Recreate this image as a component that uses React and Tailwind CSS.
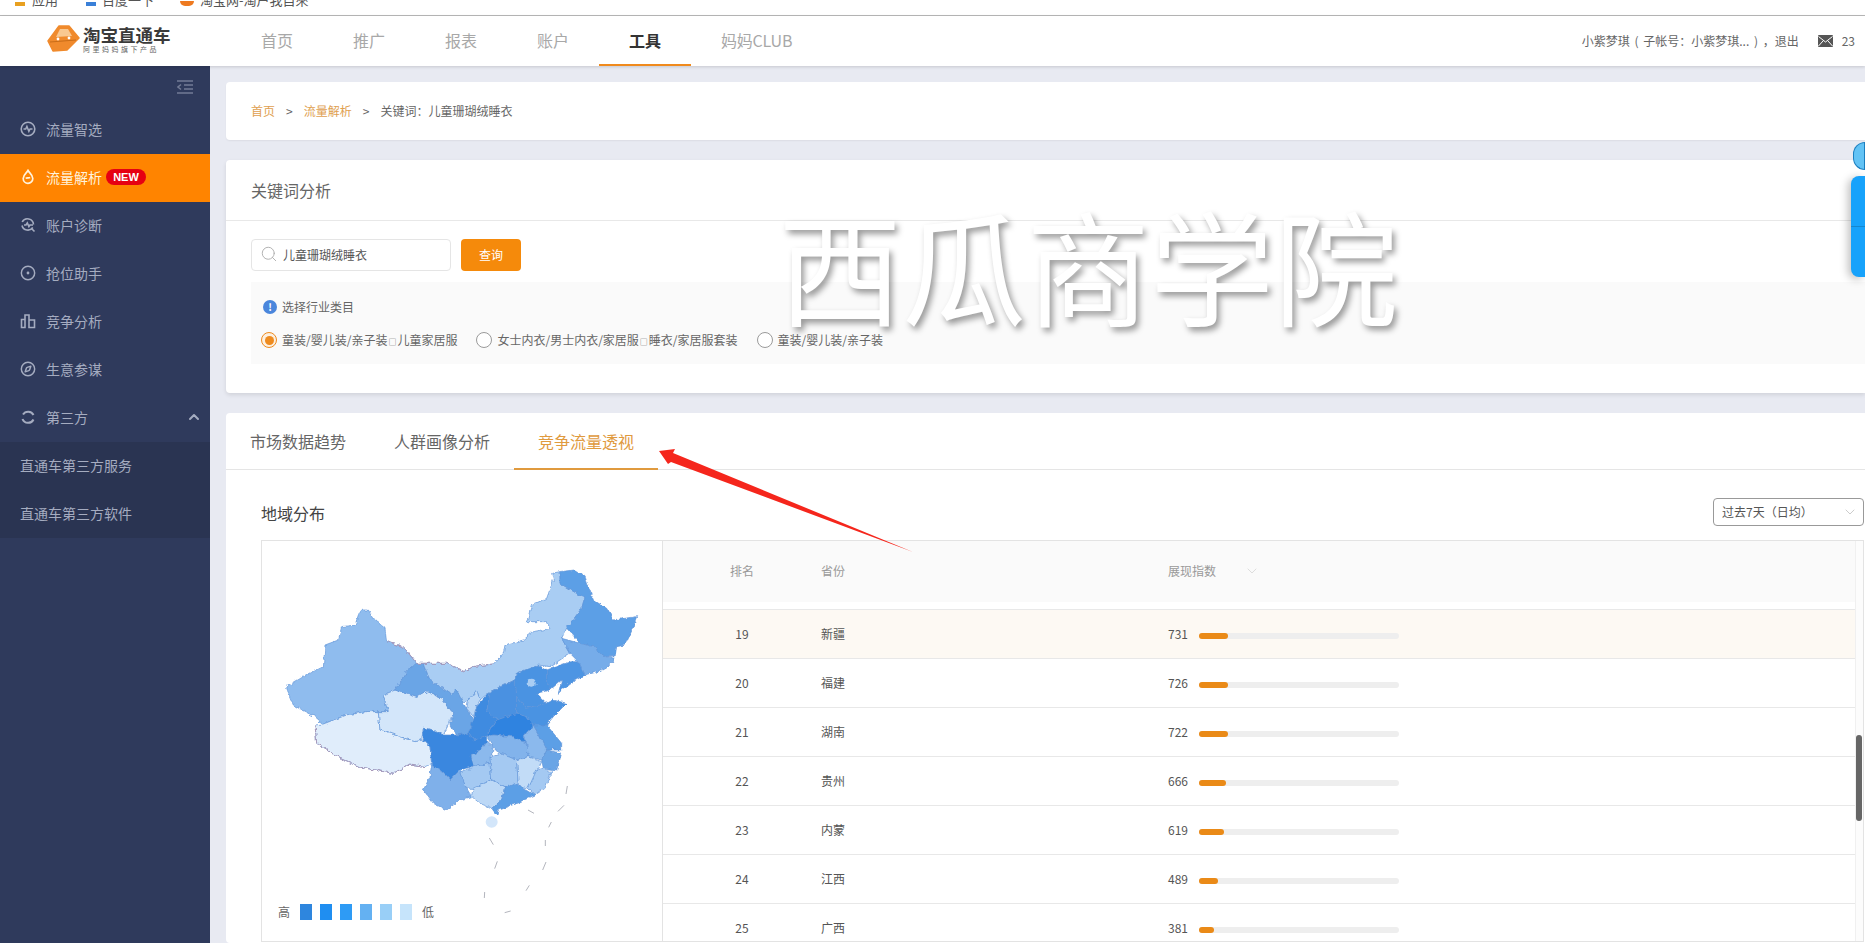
import { ChevronDown, ChevronUp, Compass, CircleDot, Search } from 'lucide-react';

const NAV = ['首页', '推广', '报表', '账户', '工具'];

const SIDE = [
  { key: 'pick', label: '流量智选' },
  { key: 'parse', label: '流量解析', active: true },
  { key: 'check', label: '账户诊断' },
  { key: 'rank', label: '抢位助手' },
  { key: 'bars', label: '竞争分析' },
  { key: 'compass', label: '生意参谋' },
];

const ROWS = [
  { rank: 19, name: '新疆', value: 731, hot: true },
  { rank: 20, name: '福建', value: 726 },
  { rank: 21, name: '湖南', value: 722 },
  { rank: 22, name: '贵州', value: 666 },
  { rank: 23, name: '内蒙', value: 619 },
  { rank: 24, name: '江西', value: 489 },
  { rank: 25, name: '广西', value: 381 },
];

const LEGEND = ['bg-[#2e86de]', 'bg-[#1f8ef1]', 'bg-[#2e9bf5]', 'bg-[#64b1f2]', 'bg-[#99cff7]', 'bg-[#c6e4fb]'];

// traced by hand from the map, in 3x coordinates
const PROVINCES = [
  ['#8fbcee', '80,440 130,410 190,380 195,315 235,300 245,260 285,255 295,225 305,210 325,210 345,240 375,265 380,305 430,320 470,370 440,395 405,450 370,465 385,515 320,515 260,525 190,552 165,530 125,510 100,495 85,460'],
  ['#e0edfb', '165,555 190,552 260,525 320,515 355,515 360,570 420,590 465,605 490,600 510,620 515,670 495,680 450,672 400,700 345,690 295,680 240,655 205,630 170,610'],
  ['#d3e6fa', '370,465 405,450 470,472 500,455 545,475 580,520 565,555 550,585 520,570 490,565 485,600 465,605 420,590 360,570 355,515 385,515'],
  ['#6aa5e6', '470,370 490,370 510,420 540,440 570,460 590,450 610,490 640,540 625,580 590,585 570,555 580,520 545,475 500,455 470,472 405,450 440,395'],
  ['#a9cdf3', '490,370 560,370 610,392 650,378 700,372 730,340 735,315 790,300 820,275 870,265 860,245 800,245 815,195 860,175 880,120 875,100 900,95 900,130 950,160 975,170 965,205 920,265 905,295 930,340 870,380 835,375 770,400 765,420 690,455 660,480 650,450 625,480 610,490 590,450 570,460 540,440 510,420'],
  ['#5c9fe6', '900,95 940,90 975,110 1000,180 1040,205 1060,240 1130,230 1115,270 1095,315 1070,320 1065,350 1035,350 1000,320 960,310 920,265 965,205 975,170 950,160 900,130'],
  ['#76ace9', '905,295 960,310 1000,320 1035,350 1065,355 1050,375 1015,395 975,405 955,365 930,340'],
  ['#4d95e3', '860,390 930,365 955,365 975,405 930,430 895,460 905,420 870,450 860,420'],
  ['#4a93e2', '770,400 835,375 860,390 860,420 870,450 830,460 860,490 800,505 770,470 765,420'],
  ['#4a91e1', '690,455 765,420 770,470 770,520 710,540 680,515'],
  ['#bcd8f6', '625,480 650,450 660,480 650,500 640,530 620,505'],
  ['#3f8be0', '640,540 650,500 690,455 680,515 710,540 680,590 640,600 625,580'],
  ['#2f83e0', '710,540 770,520 800,530 820,555 790,590 800,610 760,590 700,585 680,590'],
  ['#4a93e2', '800,505 860,490 880,480 920,490 880,530 860,555 820,555 800,530 770,520 770,470'],
  ['#3a87df', '490,565 520,570 550,585 590,585 625,580 640,600 680,590 680,605 660,630 630,650 640,680 600,690 570,720 550,700 515,670 510,620 490,600'],
  ['#7fb0ea', '515,670 550,700 570,720 600,690 610,710 620,745 635,770 600,780 560,810 520,790 490,750 510,710'],
  ['#a4c9f2', '600,700 640,680 690,670 695,720 640,745 620,745'],
  ['#8bb9ed', '630,650 660,630 680,605 700,620 690,670 640,680'],
  ['#82b3eb', '680,590 700,585 760,590 800,610 805,650 770,660 720,640 700,620'],
  ['#a4c9f2', '690,650 720,640 770,660 775,735 735,740 695,720'],
  ['#bcd8f6', '640,745 695,720 735,740 725,780 695,805 660,790 635,770'],
  ['#5c9fe6', '735,740 760,730 785,740 825,765 770,790 715,810 710,825 695,805 725,780'],
  ['#c2dcf7', '770,660 805,650 845,665 830,700 805,745 785,740 775,735'],
  ['#a4c9f2', '830,690 850,685 875,695 855,745 825,765 805,745'],
  ['#6aa5e6', '860,630 905,640 890,690 850,685 845,660'],
  ['#8bb9ed', '790,590 820,555 840,590 860,630 845,660 805,650 800,610'],
  ['#5c9fe6', '820,555 860,555 905,610 905,630 860,630 840,590'],
];

const DASHES = [
  '922,738 918,762', '912,796 894,814', '874,846 866,862', '856,900 856,918', '858,966 848,990',
  '688,894 700,914', '712,964 704,986', '674,1056 673,1074', '752,1113 734,1118', '808,1036 798,1052', '804,810 822,820',
];

function SideIcon({ name }) {
  const cls = 'w-4 h-4';
  if (name === 'pick') {
    return (
      <svg className={cls} viewBox="0 0 16 16" fill="none" stroke="currentColor">
        <circle cx="8" cy="8" r="6.8" strokeWidth="1.6" />
        <path d="M3.5 8h2.2l1.2-2.6 2 5 1.2-2.4h2.4" strokeWidth="1.5" />
      </svg>
    );
  }
  if (name === 'parse') {
    return (
      <svg className={cls} viewBox="0 0 16 16" fill="none" stroke="currentColor" strokeWidth="1.7">
        <path d="M8 1.5c1 2 4.8 4.2 4.8 8a4.8 4.8 0 0 1-9.6 0c0-3.800 3.800-6 4.800-8z" />
        <path d="M5.800 9.500c1-1.300 2.600-.2 4.400-1" />
      </svg>
    );
  }
  if (name === 'check') {
    return (
      <svg className={cls} viewBox="0 0 16 16" fill="none" stroke="currentColor" strokeWidth="1.6">
        <path d="M2.200 5A6 6 0 0 1 13.500 7.500M12.800 10.500A6 6 0 0 1 2 8.500" />
        <path d="M4 8h2l1.300-2 1.600 3.500 1-1.500H13M11.500 11.500l3 3" />
      </svg>
    );
  }
  if (name === 'rank') return <CircleDot className={cls} strokeWidth={2.2} />;
  if (name === 'bars') {
    return (
      <svg className={cls} viewBox="0 0 16 16" fill="none" stroke="currentColor" strokeWidth="1.6">
        <path d="M1.500 14.500v-8h3.500v8zM5 14.500V2h4v12.500M9 14.500V7h5.500v7.500z" />
      </svg>
    );
  }
  if (name === 'compass') return <Compass className={cls} strokeWidth={2.2} />;
  return (
    <svg className={cls} viewBox="0 0 16 16" fill="none" stroke="currentColor" strokeWidth="2">
      <path d="M3 5.500A6 6 0 0 1 13.500 6M13.500 10.500A6 6 0 0 1 2.500 10" />
    </svg>
  );
}

function ChinaMap() {
  return (
    <svg className="w-[410px] h-[403px] -ml-[2px] -mt-[1px] shrink-0" viewBox="0 0 1230 1209">
      <defs>
        {/* roughens the hand-traced outlines so they read as borders */}
        <filter id="rough" x="-5%" y="-5%" width="110%" height="110%" colorInterpolationFilters="sRGB">
          <feTurbulence type="fractalNoise" baseFrequency="0.07" numOctaves="2" seed="4" result="noise" />
          <feDisplacementMap in="SourceGraphic" in2="noise" scale="14" xChannelSelector="R" yChannelSelector="G" />
        </filter>
      </defs>
      <g filter="url(#rough)">
        {PROVINCES.map(([fill, points], i) => (
          <polygon key={i} points={points} fill={fill} stroke="#5d92d8" strokeWidth="2" strokeLinejoin="round" />
        ))}
        <polyline points="165,555 170,610 205,630 240,655 295,680 345,690 400,700 450,672 495,680" fill="none" stroke="#a998b8" strokeWidth="3" />
        <polyline points="380,305 430,320 470,370 490,370 560,370 610,392 650,378 700,372" fill="none" stroke="#a998b8" strokeWidth="3" />
        <ellipse cx="815" cy="428" rx="12" ry="12" fill="#a9cdf3" />
      </g>
      <ellipse cx="695" cy="846" rx="18" ry="17" fill="#d3e6fa" />
      {DASHES.map(d => (
        <polyline key={d} points={d} fill="none" stroke="#8d8f9c" strokeWidth="2" />
      ))}
    </svg>
  );
}

function Radio({ label, extra, checked }) {
  return (
    <div className="flex items-center gap-[5px]">
      {checked ? (
        <span className="w-[16px] h-[16px] rounded-full border border-[#ee8b1f] bg-[#fdf0e0] flex items-center justify-center">
          <span className="w-[9px] h-[9px] rounded-full bg-[#ee8b1f]" />
        </span>
      ) : (
        <span className="w-[16px] h-[16px] rounded-full border border-[#9a9a9a] bg-white" />
      )}
      <span className="text-xs text-[#666]">
        {label}
        {extra && <span className="text-[8px] mx-[1px]">□</span>}
        {extra}
      </span>
    </div>
  );
}

export default function App() {
  return (
    <div className="relative w-[1865px] h-[943px] overflow-hidden bg-[#e8eaf2] font-['Noto_Sans_CJK_SC','Liberation_Sans',sans-serif]">
      {/* browser bookmarks, cut off at the top */}
      <div className="h-[16px] bg-white border-b border-[#b8b8b8] overflow-hidden flex items-end gap-[8px] pl-[15px] text-[13px] leading-[13px] text-[#555]">
        <span className="flex items-center gap-[7px] mb-[9px]">
          <span className="w-[10px] h-[4px] bg-[#e8a020] mt-[8px]" />应用
        </span>
        <span className="flex items-center gap-[6px] mb-[9px] ml-[20px]">
          <span className="w-[10px] h-[4px] bg-[#3a80d8] mt-[8px]" />百度一下
        </span>
        <span className="flex items-center gap-[6px] mb-[9px] ml-[18px]">
          <span className="w-[14px] h-[5px] rounded-b-full bg-[#ee7a20] mt-[8px]" />淘宝网-淘户我自來
        </span>
      </div>

      {/* top nav */}
      <header className="h-[50px] bg-white flex items-stretch relative z-10 shadow-[0_1px_3px_rgba(0,0,0,0.15)]">
        <div className="w-[231px] shrink-0 pl-[47px] flex items-center gap-[3px]">
          <svg className="w-[33px] h-[27px] -mt-[5px]" viewBox="0 0 33 27">
            <polygon points="1,16 12,1 22,1 32,13 20,25 6,26" fill="#f08a2c" stroke="#f08a2c" strokeWidth="1.500" strokeLinejoin="round" />
            <polygon points="13,4 21,4 25,11 9,12" fill="#f9c890" />
            <path d="M3 17 29 15" stroke="#c96c17" strokeWidth="1" />
            <circle cx="11" cy="14" r="1.400" fill="#fff" />
            <circle cx="22" cy="13" r="1.400" fill="#fff" />
          </svg>
          <div className="flex flex-col -mt-[4px]">
            <span className="text-[17.500px] leading-[20px] font-bold text-[#3a3a3a] whitespace-nowrap">淘宝直通车</span>
            <span className="text-[7px] leading-[9px] tracking-[2.500px] text-[#666] whitespace-nowrap">阿里妈妈旗下产品</span>
          </div>
        </div>
        <nav className="flex">
          {NAV.map(n => (
            <div
              key={n}
              className={n === '工具'
                ? 'w-[92px] flex items-center justify-center pb-[1px] text-base font-bold text-[#333] border-b-2 border-[#f08a1d]'
                : 'w-[92px] flex items-center justify-center pb-[3px] text-base text-[#a8a8a8]'}
            >
              {n}
            </div>
          ))}
          <div className="px-[30px] flex items-center pb-[3px] text-base tracking-[-0.2px] text-[#a8a8a8]">妈妈CLUB</div>
        </nav>
        <div className="ml-auto flex items-center pr-[10px] text-xs text-[#666]">
          <span className="[word-spacing:2px]">小紫梦琪 ( 子帐号：小紫梦琪... ) ，退出</span>
          <svg className="w-[15px] h-[12px] ml-[19px] mr-[9px]" viewBox="0 0 15 12">
            <rect width="15" height="12" rx="1" fill="#555" />
            <path d="M0.500 1.500 7.500 7l7-5.500M0.500 11 5 6M14.500 11 10 6" fill="none" stroke="#fff" strokeWidth="1" />
          </svg>
          <span>23</span>
        </div>
      </header>

      <div className="flex h-[877px]">
        {/* sidebar */}
        <aside className="w-[210px] shrink-0 bg-[#2f3a5c] text-[#a5acc0] text-sm">
          <div className="h-[40px] flex items-center justify-end pr-[17px] pt-[2px]">
            <svg className="w-[16px] h-[14px]" viewBox="0 0 16 14" fill="none" stroke="#737b95" strokeWidth="1.500">
              <path d="M0 1h16M7 5h9M7 9h9M0 13h16M4 4.500 1 7l3 2.500" />
            </svg>
          </div>
          {SIDE.map(s => (
            <div
              key={s.key}
              className={s.active
                ? 'h-[48px] flex items-center pl-[20px] pb-[2px] gap-[10px] bg-[#ff8400] text-[#fff3dc]'
                : 'h-[48px] flex items-center pl-[20px] pb-[2px] gap-[10px]'}
            >
              <SideIcon name={s.key} />
              <span>{s.label}</span>
              {s.active && (
                <span className="-ml-[6px] w-[40px] h-[16px] rounded-full bg-[#e60012] text-white text-[11px] leading-[16px] font-bold text-center font-['Liberation_Sans',sans-serif]">
                  NEW
                </span>
              )}
            </div>
          ))}
          <div className="h-[48px] flex items-center pl-[20px] pb-[2px] gap-[10px]">
            <SideIcon name="third" />
            <span>第三方</span>
            <ChevronUp className="w-[16px] h-[16px] ml-auto mr-[8px]" strokeWidth={3} />
          </div>
          <div className="bg-[#2a3452]">
            <div className="h-[48px] flex items-center pl-[20px] pb-[2px]">直通车第三方服务</div>
            <div className="h-[48px] flex items-center pl-[20px] pb-[2px]">直通车第三方软件</div>
          </div>
        </aside>

        {/* content */}
        <main className="flex-1 min-w-0 pt-[16px] pl-[16px]">
          <div className="h-[58px] bg-white rounded-l-[4px] flex items-center pl-[25px] text-xs text-[#666] shadow-[0_1px_2px_rgba(0,0,0,0.06)]">
            <span className="text-[#e0a050]">首页</span>
            <span className="mx-[11px]">&gt;</span>
            <span className="text-[#e0a050]">流量解析</span>
            <span className="mx-[11px]">&gt;</span>
            <span>关键词：儿童珊瑚绒睡衣</span>
          </div>

          <section className="mt-[20px] h-[233px] bg-white rounded-l-[4px] shadow-[0_2px_4px_rgba(0,0,0,0.1)]">
            <div className="h-[61px] border-b border-[#e8e8e8] flex items-center pl-[25px] text-base text-[#666]">关键词分析</div>
            <div className="pl-[25px] pt-[18px] flex gap-[10px]">
              <div className="w-[200px] h-[32px] border border-[#e5e5e5] rounded-[4px] flex items-center pl-[8px] gap-[5px] text-xs text-[#555]">
                <Search className="w-[18px] h-[18px] -mt-[3px] text-[#aaa]" strokeWidth={1.200} />
                <span>儿童珊瑚绒睡衣</span>
              </div>
              <div className="w-[60px] h-[32px] bg-[#f58a0b] rounded-[4px] flex items-center justify-center text-xs text-white">查询</div>
            </div>
            <div className="ml-[25px] mt-[11px] h-[82px] bg-[#fafafa] pl-[10px] pt-[17px]">
              <div className="flex items-center gap-[5px] text-xs text-[#666] pl-[2px]">
                <span className="w-[14px] h-[14px] rounded-full bg-[#4a86dc] text-white text-[10px] leading-[14px] font-bold text-center">!</span>
                选择行业类目
              </div>
              <div className="flex items-center gap-[19px] mt-[17px]">
                <Radio checked label="童装/婴儿装/亲子装" extra="儿童家居服" />
                <Radio label="女士内衣/男士内衣/家居服" extra="睡衣/家居服套装" />
                <Radio label="童装/婴儿装/亲子装" />
              </div>
            </div>
          </section>

          <section className="mt-[20px] bg-white rounded-l-[4px] h-[530px]">
            <div className="h-[57px] border-b border-[#e5e5e5] flex text-base text-[#666]">
              <div className="w-[144px] flex items-center justify-center">市场数据趋势</div>
              <div className="w-[144px] flex items-center justify-center">人群画像分析</div>
              <div className="w-[144px] flex items-center justify-center text-[#e09a3e] border-b-2 border-[#e09a3e] -mb-[1px]">竞争流量透视</div>
            </div>
            <div className="pl-[35px] pr-[1px]">
              <div className="h-[28px] mt-[28px] flex items-center justify-between">
                <span className="text-base text-[#444] pt-[2px]">地域分布</span>
                <div className="w-[151px] h-[28px] border border-[#999] rounded-[4px] flex items-center justify-between pl-[8px] pr-[5px] text-xs text-[#555]">
                  过去7天（日均）
                  <ChevronDown className="w-[16px] h-[16px] text-[#ccc]" strokeWidth={1.500} />
                </div>
              </div>
              <div className="mt-[14px] h-[402px] border border-[#e3e3e3] flex overflow-hidden">
                <div className="relative w-[401px] shrink-0 border-r border-[#e3e3e3] overflow-hidden">
                  <ChinaMap />
                  <div className="absolute left-[16px] top-[363px] flex items-center gap-[8px] text-xs text-[#666]">
                    <span className="mr-[2px]">高</span>
                    {LEGEND.map(c => (
                      <span key={c} className={`w-[12px] h-[16px] ${c}`} />
                    ))}
                    <span className="ml-[2px]">低</span>
                  </div>
                </div>
                <div className="flex-1 min-w-0">
                  <div className="h-[61px] bg-[#fafafa] flex items-center pb-[2px] text-xs text-[#999]">
                    <div className="w-[158px] text-center">排名</div>
                    <div className="w-[347px]">省份</div>
                    <div className="flex items-center gap-[28px]">
                      展现指数
                      <ChevronDown className="w-[16px] h-[16px] text-[#ddd]" strokeWidth={1.500} />
                    </div>
                  </div>
                  <div className="h-[8px] border-b border-[#e8e8e8]" />
                  {ROWS.map(r => (
                    <div
                      key={r.rank}
                      className={r.hot
                        ? 'h-[49px] shrink-0 flex items-center text-xs text-[#555] border-b border-[#e8e8e8] bg-[#fdf9f3]'
                        : 'h-[49px] shrink-0 flex items-center text-xs text-[#555] border-b border-[#e8e8e8]'}
                    >
                      <div className="w-[158px] text-center">{r.rank}</div>
                      <div className="w-[347px]">{r.name}</div>
                      <div className="w-[31px]">{r.value}</div>
                      <div className="w-[200px] h-[6px] mt-[3px] rounded-full bg-[#eeeeee]">
                        <div className="h-full rounded-full bg-[#ea8a17]" style={{ width: r.value * 0.0398 }} />
                      </div>
                    </div>
                  ))}
                </div>
                <div className="w-[8px] shrink-0 bg-[#fcfcfc] border-l border-[#f0f0f0]">
                  <div className="mt-[194px] h-[86px] w-[6px] rounded-full bg-[#666]" />
                </div>
              </div>
            </div>
          </section>
        </main>
      </div>

      {/* floating help widget at the right edge */}
      <div className="absolute right-0 top-[142px] w-[12px] h-[28px] rounded-l-full bg-[#63c3f5] border border-[#1b7fc0]" />
      <div className="absolute right-0 top-[176px] w-[14px] h-[101px] rounded-l-[8px] bg-[#17a2fb] shadow-[-3px_2px_8px_rgba(0,0,0,0.25)] flex flex-col justify-center">
        <div className="h-px bg-[#1487d0]" />
      </div>

      {/* watermark */}
      <div className="absolute left-[778px] top-[198px] text-[124px] leading-[130px] text-white whitespace-nowrap pointer-events-none [text-shadow:3px_4px_6px_rgba(0,0,0,0.4)]">
        西瓜商学院
      </div>

      {/* red annotation arrow */}
      <svg className="absolute left-[650px] top-[440px] w-[270px] h-[120px] pointer-events-none" viewBox="0 0 270 120">
        <polygon points="9,11 25,9 23,13 263,112 21,22 18,24" fill="#f5261c" />
      </svg>
    </div>
  );
}
